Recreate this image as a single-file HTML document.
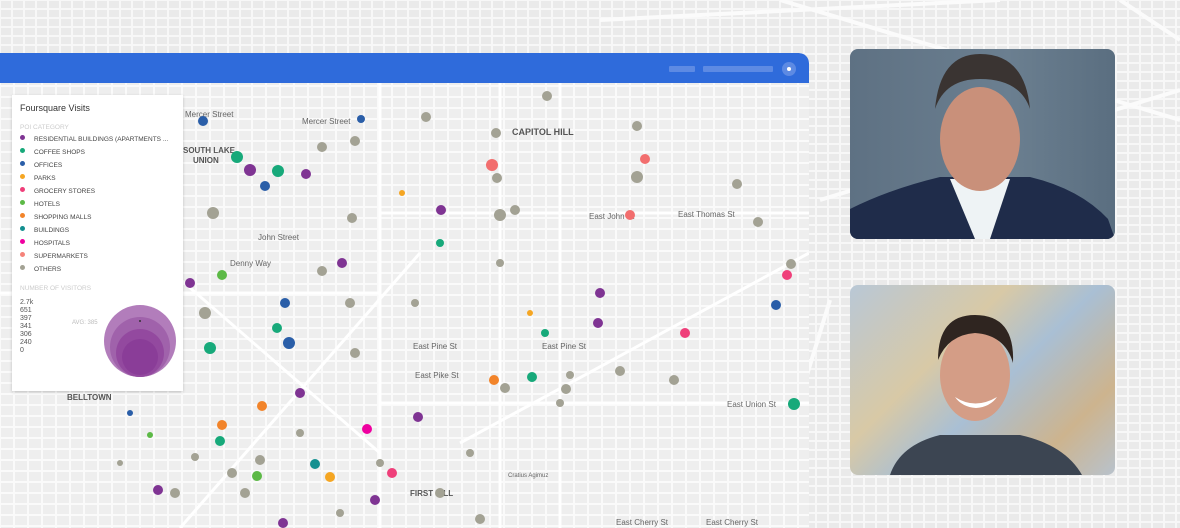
<!DOCTYPE html>
<html><head><meta charset="utf-8">
<style>
*{margin:0;padding:0;box-sizing:border-box}
body{width:1180px;height:528px;overflow:hidden;background:#efefef;font-family:"Liberation Sans",sans-serif;position:relative}
.bg{position:absolute;inset:0}
.panel{position:absolute;left:0;top:53px;width:809px;height:475px;overflow:hidden;border-top-right-radius:10px;background:#f3f3f3}
.hdr{position:absolute;left:0;top:0;width:809px;height:30px;background:#2f6bdb;border-top-right-radius:10px}
.legend{position:absolute;left:12px;top:42px;width:171px;height:296px;background:#fff;box-shadow:0 1px 3px rgba(0,0,0,.2);font-size:7px;color:#333}
.legend h4{font-size:9px;font-weight:normal;color:#333;position:absolute;left:8px;top:8px}
.cat{position:absolute;left:8px;color:#ccc;font-size:6.5px}
.row{position:absolute;left:8px;font-size:6.5px;color:#444;height:10px;line-height:10px}
.row i{display:inline-block;width:5px;height:5px;border-radius:50%;margin-right:9px;vertical-align:1px}
.photo{position:absolute;left:850px;width:265px;height:190px;border-radius:8px;overflow:hidden}
</style></head><body>
<svg class="bg" width="1180" height="528">
<defs>
<pattern id="g" width="12" height="9" patternUnits="userSpaceOnUse"><rect width="12" height="9" fill="#f7f7f7"/><rect x="1" y="1" width="10" height="7" fill="#eaeaea"/></pattern>
</defs>
<rect width="1180" height="528" fill="url(#g)"/>
<g stroke="#fbfbfb" stroke-width="4" fill="none">
<path d="M780 0 L1180 120"/><path d="M820 200 L1180 90"/><path d="M830 300 L760 528"/><path d="M1120 0 L1180 40"/><path d="M600 20 L1000 0"/>
</g>
</svg>

<div class="panel">
<svg width="809" height="475" style="position:absolute;left:0;top:0">
<defs><pattern id="m" width="14" height="11" patternUnits="userSpaceOnUse"><rect width="14" height="11" fill="#fafafa"/><rect x="1" y="1" width="12" height="9" fill="#eeeeee"/></pattern></defs>
<rect width="809" height="475" fill="url(#m)"/>
<g stroke="#fff" stroke-width="3" fill="none">
<path d="M380 30 L380 475"/><path d="M500 30 L500 475"/><path d="M560 30 L560 475"/><path d="M0 240 L380 240"/><path d="M180 475 L420 200"/><path d="M460 390 L809 200"/><path d="M380 350 L809 350"/><path d="M380 160 L809 160"/><path d="M150 200 L380 400"/>
</g>
<g font-size="8" fill="#666">
<text x="512" y="82" font-weight="bold" font-size="9" fill="#555">CAPITOL HILL</text>
<text x="183" y="100" font-weight="bold" font-size="8" fill="#555">SOUTH LAKE</text>
<text x="193" y="110" font-weight="bold" font-size="8" fill="#555">UNION</text>
<text x="67" y="347" font-weight="bold" font-size="8" fill="#555">BELLTOWN</text>
<text x="410" y="443" font-weight="bold" font-size="8" fill="#555">FIRST HILL</text>
<text x="185" y="64">Mercer Street</text><text x="302" y="71">Mercer Street</text>
<text x="258" y="187">John Street</text><text x="589" y="166">East John St</text>
<text x="230" y="213">Denny Way</text><text x="413" y="296">East Pine St</text>
<text x="542" y="296">East Pine St</text><text x="678" y="164">East Thomas St</text>
<text x="415" y="325">East Pike St</text><text x="727" y="354">East Union St</text>
<text x="616" y="472">East Cherry St</text><text x="706" y="472">East Cherry St</text>
<text x="508" y="424" font-size="6">Cratius Agimuz</text>
</g>
<g>
<circle cx="140" cy="300" r="36" fill="#8b3d96" opacity=".85"/>
<circle cx="140" cy="300" r="28" fill="#7e2f8c" opacity=".6"/>
</g>
<g id="dots">
<circle cx="203" cy="68" r="5" fill="#2a5ea8"/><circle cx="237" cy="104" r="6" fill="#17a97a"/><circle cx="250" cy="117" r="6" fill="#7f3493"/><circle cx="278" cy="118" r="6" fill="#17a97a"/><circle cx="265" cy="133" r="5" fill="#2a5ea8"/><circle cx="213" cy="160" r="6" fill="#a3a294"/><circle cx="306" cy="121" r="5" fill="#7f3493"/><circle cx="322" cy="94" r="5" fill="#a3a294"/><circle cx="361" cy="66" r="4" fill="#2a5ea8"/><circle cx="355" cy="88" r="5" fill="#a3a294"/><circle cx="426" cy="64" r="5" fill="#a3a294"/><circle cx="547" cy="43" r="5" fill="#a3a294"/><circle cx="496" cy="80" r="5" fill="#a3a294"/><circle cx="492" cy="112" r="6" fill="#f26e6e"/><circle cx="497" cy="125" r="5" fill="#a3a294"/><circle cx="402" cy="140" r="3" fill="#f5a623"/><circle cx="441" cy="157" r="5" fill="#7f3493"/><circle cx="500" cy="162" r="6" fill="#a3a294"/><circle cx="515" cy="157" r="5" fill="#a3a294"/><circle cx="352" cy="165" r="5" fill="#a3a294"/><circle cx="637" cy="73" r="5" fill="#a3a294"/><circle cx="645" cy="106" r="5" fill="#f26e6e"/><circle cx="637" cy="124" r="6" fill="#a3a294"/><circle cx="630" cy="162" r="5" fill="#f26e6e"/><circle cx="737" cy="131" r="5" fill="#a3a294"/><circle cx="758" cy="169" r="5" fill="#a3a294"/><circle cx="787" cy="222" r="5" fill="#ef3f7a"/><circle cx="791" cy="211" r="5" fill="#a3a294"/><circle cx="776" cy="252" r="5" fill="#2a5ea8"/><circle cx="685" cy="280" r="5" fill="#ef3f7a"/><circle cx="600" cy="240" r="5" fill="#7f3493"/><circle cx="598" cy="270" r="5" fill="#7f3493"/><circle cx="620" cy="318" r="5" fill="#a3a294"/><circle cx="674" cy="327" r="5" fill="#a3a294"/><circle cx="570" cy="322" r="4" fill="#a3a294"/><circle cx="342" cy="210" r="5" fill="#7f3493"/><circle cx="322" cy="218" r="5" fill="#a3a294"/><circle cx="350" cy="250" r="5" fill="#a3a294"/><circle cx="285" cy="250" r="5" fill="#2a5ea8"/><circle cx="277" cy="275" r="5" fill="#17a97a"/><circle cx="289" cy="290" r="6" fill="#2a5ea8"/><circle cx="210" cy="295" r="6" fill="#17a97a"/><circle cx="190" cy="230" r="5" fill="#7f3493"/><circle cx="222" cy="222" r="5" fill="#5cb946"/><circle cx="205" cy="260" r="6" fill="#a3a294"/><circle cx="530" cy="260" r="3" fill="#f5a623"/><circle cx="545" cy="280" r="4" fill="#17a97a"/><circle cx="494" cy="327" r="5" fill="#f2842a"/><circle cx="505" cy="335" r="5" fill="#a3a294"/><circle cx="532" cy="324" r="5" fill="#17a97a"/><circle cx="566" cy="336" r="5" fill="#a3a294"/><circle cx="418" cy="364" r="5" fill="#7f3493"/><circle cx="367" cy="376" r="5" fill="#ef00a0"/><circle cx="392" cy="420" r="5" fill="#ef3f7a"/><circle cx="330" cy="424" r="5" fill="#f5a623"/><circle cx="315" cy="411" r="5" fill="#138f8f"/><circle cx="375" cy="447" r="5" fill="#7f3493"/><circle cx="262" cy="353" r="5" fill="#f2842a"/><circle cx="222" cy="372" r="5" fill="#f2842a"/><circle cx="220" cy="388" r="5" fill="#17a97a"/><circle cx="260" cy="407" r="5" fill="#a3a294"/><circle cx="257" cy="423" r="5" fill="#5cb946"/><circle cx="283" cy="470" r="5" fill="#7f3493"/><circle cx="175" cy="440" r="5" fill="#a3a294"/><circle cx="158" cy="437" r="5" fill="#7f3493"/><circle cx="794" cy="351" r="6" fill="#17a97a"/><circle cx="480" cy="466" r="5" fill="#a3a294"/><circle cx="245" cy="440" r="5" fill="#a3a294"/><circle cx="232" cy="420" r="5" fill="#a3a294"/><circle cx="355" cy="300" r="5" fill="#a3a294"/><circle cx="300" cy="340" r="5" fill="#7f3493"/><circle cx="440" cy="440" r="5" fill="#a3a294"/><circle cx="380" cy="410" r="4" fill="#a3a294"/><circle cx="470" cy="400" r="4" fill="#a3a294"/><circle cx="560" cy="350" r="4" fill="#a3a294"/><circle cx="415" cy="250" r="4" fill="#a3a294"/><circle cx="500" cy="210" r="4" fill="#a3a294"/><circle cx="440" cy="190" r="4" fill="#17a97a"/>
<circle cx="150" cy="382" r="3" fill="#5cb946"/><circle cx="130" cy="360" r="3" fill="#2a5ea8"/><circle cx="120" cy="410" r="3" fill="#a3a294"/><circle cx="195" cy="404" r="4" fill="#a3a294"/><circle cx="300" cy="380" r="4" fill="#a3a294"/><circle cx="340" cy="460" r="4" fill="#a3a294"/>
</g>
</svg>
<div class="hdr">
<div style="position:absolute;left:669px;top:13px;width:26px;height:6px;background:#5d8ae3;border-radius:1px"></div>
<div style="position:absolute;left:703px;top:13px;width:70px;height:6px;background:#5d8ae3;border-radius:1px"></div>
<div style="position:absolute;left:782px;top:9px;width:14px;height:14px;background:#5d8ae3;border-radius:50%"></div>
<div style="position:absolute;left:787px;top:14px;width:4px;height:4px;background:#fff;border-radius:50%"></div>
</div>
<div class="legend">
<h4>Foursquare Visits</h4>
<div class="cat" style="top:29px">POI CATEGORY</div>
<div class="row" style="top:40px"><i style="background:#7f3493"></i>RESIDENTIAL BUILDINGS (APARTMENTS ...</div>
<div class="row" style="top:53px"><i style="background:#17a97a"></i>COFFEE SHOPS</div>
<div class="row" style="top:66px"><i style="background:#2a5ea8"></i>OFFICES</div>
<div class="row" style="top:79px"><i style="background:#f5a623"></i>PARKS</div>
<div class="row" style="top:92px"><i style="background:#ef3f7a"></i>GROCERY STORES</div>
<div class="row" style="top:105px"><i style="background:#5cb946"></i>HOTELS</div>
<div class="row" style="top:118px"><i style="background:#f2842a"></i>SHOPPING MALLS</div>
<div class="row" style="top:131px"><i style="background:#138f8f"></i>BUILDINGS</div>
<div class="row" style="top:144px"><i style="background:#ef00a0"></i>HOSPITALS</div>
<div class="row" style="top:157px"><i style="background:#f5837a"></i>SUPERMARKETS</div>
<div class="row" style="top:170px"><i style="background:#a3a294"></i>OTHERS</div>
<div class="cat" style="top:190px">NUMBER OF VISITORS</div>
<div style="position:absolute;left:8px;top:204px;font-size:7px;line-height:8px;color:#555">2.7k<br>651<br>397<br>341<br>306<br>240<br>0</div>
<div style="position:absolute;left:60px;top:225px;font-size:6px;color:#bbb">AVG: 385</div>
<svg width="171" height="296" style="position:absolute;left:0;top:0">
<circle cx="128" cy="246" r="36" fill="#b27dbb"/><circle cx="128" cy="252" r="30" fill="#a062ab"/><circle cx="128" cy="258" r="24" fill="#93499f"/><circle cx="128" cy="262" r="18" fill="#8a3d98"/>
<circle cx="128" cy="226" r="1" fill="#333"/>
</svg>
</div>
</div>

<div class="photo" style="top:49px;background:linear-gradient(90deg,#5e7183,#6b7f90 60%,#5a6e80)">
<svg width="265" height="190">
<path d="M0 190 L0 160 Q40 140 90 128 L180 128 Q230 140 258 170 L265 190Z" fill="#1f2c4a"/>
<path d="M100 130 L125 190 L140 190 L160 130 Z" fill="#eef3f5"/>
<ellipse cx="130" cy="90" rx="40" ry="52" fill="#c9907a"/>
<path d="M85 60 Q90 5 130 5 Q175 5 180 60 Q170 30 130 30 Q95 30 85 60Z" fill="#3a3432"/>
</svg>
</div>
<div class="photo" style="top:285px;background:linear-gradient(135deg,#b9c8d6,#d8c9a6 35%,#a9bfd4 55%,#cdb48e 80%,#b8c2cc)">
<svg width="265" height="190">
<path d="M40 190 Q50 160 90 150 L170 150 Q215 160 232 190Z" fill="#3c4552"/>
<ellipse cx="125" cy="90" rx="35" ry="46" fill="#d49d86"/>
<path d="M88 75 Q88 30 125 30 Q165 30 163 78 Q155 50 125 48 Q98 50 88 75Z" fill="#2f2520"/>
<path d="M105 112 Q125 125 147 112 Q140 122 126 123 Q112 122 105 112Z" fill="#fff"/>
</svg>
</div>
</body></html>
